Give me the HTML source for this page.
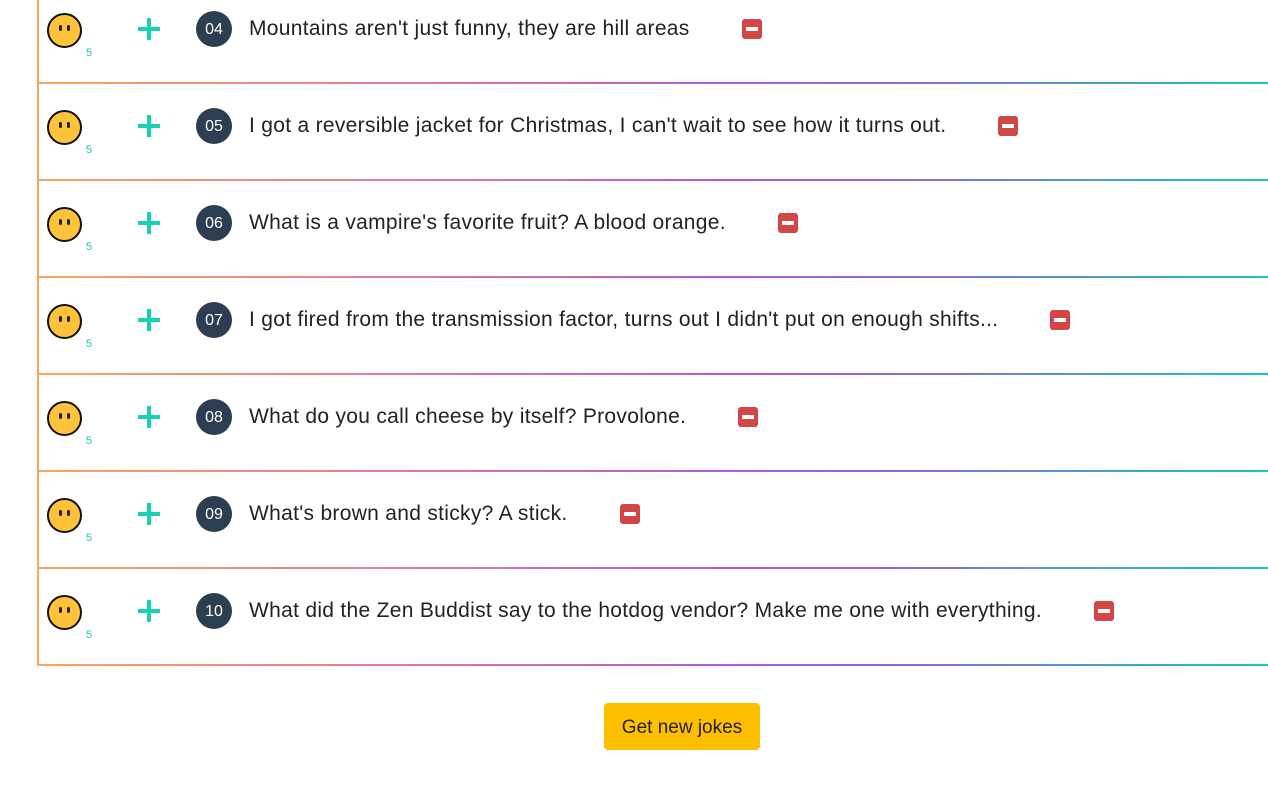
<!DOCTYPE html>
<html><head><meta charset="utf-8"><style>
body{margin:0;width:1268px;height:787px;overflow:hidden;background:#fff;font-family:"Liberation Sans",sans-serif;position:relative}
.wrap{position:absolute;left:37px;top:-13px;width:1231px;border-left:2px solid #f8a85c}
.row{position:relative;height:95px;border-bottom:2px solid transparent;border-image:linear-gradient(90deg,#f7a75c 0%,#e07a9a 30%,#b659d8 55%,#8a6ad8 70%,#18c8c0 100%) 1;border-top:0;border-left:0;border-right:0}
.emo{position:absolute;left:8px;top:26px;width:31px;height:31px;border:2px solid #111;border-radius:50%;background:#fec33b}
.emo:before,.emo:after{content:"";position:absolute;top:10px;width:3px;height:6px;background:#222;border-radius:2px}
.emo:before{left:10px}.emo:after{right:10px}
.n5{position:absolute;left:47px;top:60px;font-size:11px;color:#1bc8b8}
.plus{position:absolute;left:99px;top:31px;width:22px;height:22px}
.plus:before{content:"";position:absolute;left:0;top:9px;width:22px;height:4px;background:#1bd1b5}
.plus:after{content:"";position:absolute;left:9px;top:0;width:4px;height:22px;background:#1bd1b5}
.num{position:absolute;left:157px;top:24px;width:36px;height:36px;border-radius:50%;background:#2c3e50;color:#fff;font-size:16px;line-height:37px;text-align:center}
.txt{position:absolute;left:210px;top:30px;font-size:21px;letter-spacing:0.3px;color:#222;white-space:nowrap;display:flex;align-items:center}
.del{display:inline-block;width:20px;height:20px;background:#d24646;border-radius:3px;position:relative;margin-left:52px}
.del:after{content:"";position:absolute;left:4px;top:8px;width:12px;height:4px;background:#fff}
.btn{position:absolute;left:604px;top:703px;width:156px;height:47px;background:#fdbf00;border-radius:4px;color:#222;font-size:19px;line-height:49px;text-align:center}
</style></head><body>
<div class="wrap">
<div class="row"><div class="emo"></div><div class="n5">5</div><div class="plus"></div><div class="num">04</div><div class="txt">Mountains aren't just funny, they are hill areas<span class="del"></span></div></div>
<div class="row"><div class="emo"></div><div class="n5">5</div><div class="plus"></div><div class="num">05</div><div class="txt">I got a reversible jacket for Christmas, I can't wait to see how it turns out.<span class="del"></span></div></div>
<div class="row"><div class="emo"></div><div class="n5">5</div><div class="plus"></div><div class="num">06</div><div class="txt">What is a vampire's favorite fruit? A blood orange.<span class="del"></span></div></div>
<div class="row"><div class="emo"></div><div class="n5">5</div><div class="plus"></div><div class="num">07</div><div class="txt">I got fired from the transmission factor, turns out I didn't put on enough shifts...<span class="del"></span></div></div>
<div class="row"><div class="emo"></div><div class="n5">5</div><div class="plus"></div><div class="num">08</div><div class="txt">What do you call cheese by itself? Provolone.<span class="del"></span></div></div>
<div class="row"><div class="emo"></div><div class="n5">5</div><div class="plus"></div><div class="num">09</div><div class="txt">What's brown and sticky? A stick.<span class="del"></span></div></div>
<div class="row"><div class="emo"></div><div class="n5">5</div><div class="plus"></div><div class="num">10</div><div class="txt">What did the Zen Buddist say to the hotdog vendor? Make me one with everything.<span class="del"></span></div></div>
</div>
<div class="btn">Get new jokes</div>
</body></html>
